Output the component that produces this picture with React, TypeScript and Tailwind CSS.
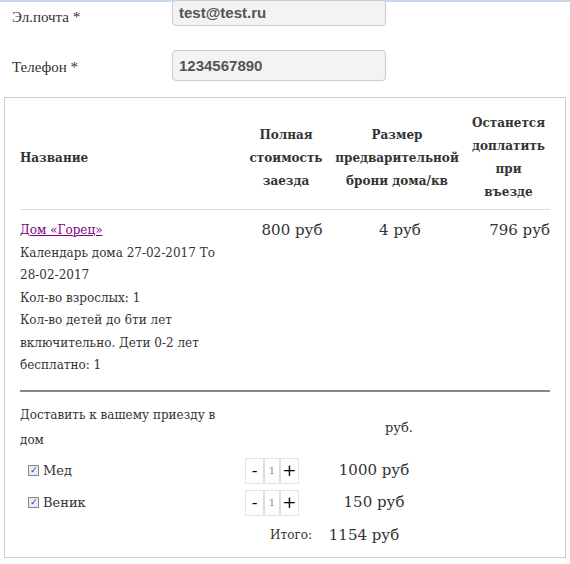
export default function App() {
  const serif = { fontFamily: '"DejaVu Serif", Georgia, serif' };
  const Stepper = () => (
    <div className="flex h-[26px] w-[54px] border border-[#e4e4e4] text-[17px] leading-none">
      <div className="flex w-[18px] items-center justify-center text-black">-</div>
      <div className="flex w-[18px] items-center justify-center border-x-2 border-[#ddd] text-[10px] text-[#888]">1</div>
      <div className="flex w-[18px] items-center justify-center text-black">+</div>
    </div>
  );
  const Check = () => (
    <span className="mr-[4px] inline-flex h-[11px] w-[11px] items-center justify-center border border-[#888] bg-[#e8eaf6] text-[9px] leading-none text-[#3344aa]">✓</span>
  );
  return (
    <div className="w-[570px] h-[564px] bg-white text-[#333] overflow-hidden" style={serif}>
      <div className="h-[2px] bg-[#c9d8ea]" />
      <div className="flex items-start h-[48px] pl-[12px]">
        <div className="w-[160px] pt-[4px] text-[13px]" style={{ fontFamily: '"Liberation Serif", Georgia, serif', fontSize: 15 }}>Эл.почта *</div>
        <div className="h-[26px] w-[214px] -mt-[2px] rounded-[4px] border border-[#ccc] bg-[#f3f3f3] px-[6px] font-bold leading-[24px] text-[#555]" style={{ fontFamily: '"Liberation Sans", Arial, sans-serif', fontSize: 15 }}>test@test.ru</div>
      </div>
      <div className="flex items-start h-[47px] pl-[12px]">
        <div className="w-[160px] pt-[6px]" style={{ fontFamily: '"Liberation Serif", Georgia, serif', fontSize: 15 }}>Телефон *</div>
        <div className="h-[31px] w-[214px] rounded-[4px] border border-[#ccc] bg-[#f3f3f3] px-[6px] font-bold leading-[29px] text-[#555]" style={{ fontFamily: '"Liberation Sans", Arial, sans-serif', fontSize: 15 }}>1234567890</div>
      </div>
      <div className="mx-[4px] h-[461px] border border-[#ccc] px-[15px] pt-[14px]">
        <div className="flex items-center border-b border-[#ddd] pb-[5px] text-[12px] font-bold leading-[23px] text-[#333]">
          <div className="w-[225px]">Название</div>
          <div className="w-[82px] text-center">Полная<br />стоимость<br />заезда</div>
          <div className="w-[140px] text-center whitespace-nowrap">Размер<br />предварительной<br />брони дома/кв</div>
          <div className="flex-1 text-center">Останется<br />доплатить<br />при<br />въезде</div>
        </div>
        <div className="flex items-start border-b-2 border-[#888] pt-[9px] pb-[13px]">
          <div className="w-[225px] pr-[18px] text-[12px] leading-[22.5px]">
            <a className="text-[#800080] underline">Дом «Горец»</a>
            <div>Календарь дома 27-02-2017 То 28-02-2017</div>
            <div>Кол-во взрослых: 1</div>
            <div>Кол-во детей до 6ти лет включительно. Дети 0-2 лет бесплатно: 1</div>
          </div>
          <div className="w-[88px] pl-[6px] text-center text-[15px] leading-[22px]">800 руб</div>
          <div className="w-[134px] text-center text-[15px] leading-[22px]">4 руб</div>
          <div className="flex-1 text-right text-[15px] leading-[22px]">796 руб</div>
        </div>
        <div className="flex items-center pt-[11px] text-[12px] leading-[25px]">
          <div className="w-[210px]">Доставить к вашему приезду в дом</div>
          <div className="w-[155px]" />
          <div className="text-[13px]">руб.</div>
        </div>
        <div className="mt-[5px] flex items-center text-[13px]">
          <div className="w-[225px] pl-[8px] flex items-center"><Check />Мед</div>
          <Stepper />
          <div className="w-[150px] text-center text-[15px]">1000 руб</div>
        </div>
        <div className="mt-[6px] flex items-center text-[13px]">
          <div className="w-[225px] pl-[8px] flex items-center"><Check />Веник</div>
          <Stepper />
          <div className="w-[150px] text-center text-[15px]">150 руб</div>
        </div>
        <div className="mt-[8px] flex items-center">
          <div className="w-[292px] text-right text-[12px]">Итого:</div>
          <div className="w-[104px] text-center text-[15px]">1154 руб</div>
        </div>
      </div>
    </div>
  );
}
